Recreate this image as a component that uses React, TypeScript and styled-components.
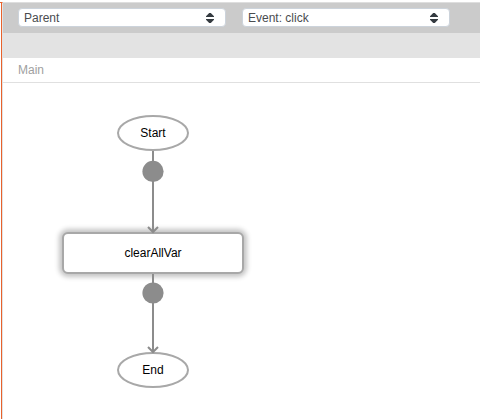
import React from "react";
import styled, { createGlobalStyle } from "styled-components";

const GlobalStyle = createGlobalStyle`
  * { box-sizing: border-box; }
  body {
    margin: 0;
    background: #fff;
    font-family: "Liberation Sans", Arial, Helvetica, sans-serif;
    font-size: 12px;
    line-height: 16px;
  }
`;

const Page = styled.div`
  display: flex;
  min-height: 100vh;
  padding-top: 2px;
`;

const SelectionEdge = styled.div`
  flex: none;
  width: 3px;
  border-top: 1px solid #e8622c;
  border-right: 1px solid #e3e3e3;
  background: linear-gradient(to right, #fff 1px, #e8622c 1px);
`;

const Editor = styled.main`
  flex: 1;
  min-width: 0;
  border-top: 1px solid #dedede;
`;

const Toolbar = styled.header`
  display: flex;
  gap: 16px;
  height: 30px;
  padding: 5px 15px 6px;
  background: #cbcbcb;
`;

const SubToolbar = styled.div`
  height: 25px;
  background: #e3e3e3;
`;

const Field = styled.div`
  position: relative;
  flex: 0 1 208px;
  min-width: 0;
`;

const Select = styled.select`
  display: block;
  width: 100%;
  height: 19px;
  padding: 0 24px 0 5px;
  border: 1px solid #ccd3db;
  border-radius: 4px;
  appearance: none;
  background: #fff;
  color: #4a4c4f;
  font: inherit;
`;

const Carets = styled.svg`
  position: absolute;
  top: 5px;
  right: 12px;
  pointer-events: none;
`;

const Breadcrumb = styled.nav`
  height: 25px;
  padding: 4px 15px;
  border-bottom: 1px solid #e0e0e0;
  color: #a0a0a0;
`;

const Canvas = styled.section`
  display: flex;
  padding: 32px 59px;
`;

const Flow = styled.div`
  display: flex;
  flex-direction: column;
  align-items: center;
`;

const Node = styled.div`
  display: flex;
  align-items: center;
  justify-content: center;
  border: 2px solid #a8a8a8;
  background: #fff;
  color: #000;
`;

const Terminal = styled(Node)`
  width: 72px;
  height: 36px;
  border-radius: 50%;
`;

const Action = styled(Node)`
  width: 182px;
  height: 42px;
  border-radius: 6px;
  box-shadow: 0 0 5px 3px #c4c4c4;
`;

const Link = styled.svg`
  display: block;
  position: relative;
  z-index: 1;
  overflow: visible;
`;

function Picker({ label, value }: { label: string; value: string }) {
  return (
    <Field>
      <Select aria-label={label} defaultValue={value}>
        <option>{value}</option>
      </Select>
      <Carets width="8" height="10" viewBox="0 0 8 10" fill="#343a40" aria-hidden="true">
        <path d="M3.2 0h1.6L8 3.2V4H0v-.8zM0 6h8v.8L4.8 10H3.2L0 6.8z" />
      </Carets>
    </Field>
  );
}

function Connector({ length, handle }: { length: number; handle: number }) {
  return (
    <Link width="24" height={length} viewBox={`0 0 24 ${length}`} aria-hidden="true">
      <path
        d={`M12 0V${length}M7 ${length - 5}l5 5 5-5`}
        fill="none"
        stroke="#8c8c8c"
        strokeWidth="2"
      />
      <circle cx="12" cy={handle} r="10.6" fill="#8c8c8c" />
    </Link>
  );
}

export default function App() {
  return (
    <>
      <GlobalStyle />
      <Page>
        <SelectionEdge />
        <Editor>
          <Toolbar>
            <Picker label="Component" value="Parent" />
            <Picker label="Event" value="Event: click" />
          </Toolbar>
          <SubToolbar />
          <Breadcrumb>Main</Breadcrumb>
          <Canvas>
            <Flow>
              <Terminal>Start</Terminal>
              <Connector length={81} handle={20.4} />
              <Action>clearAllVar</Action>
              <Connector length={78} handle={19} />
              <Terminal>End</Terminal>
            </Flow>
          </Canvas>
        </Editor>
      </Page>
    </>
  );
}
